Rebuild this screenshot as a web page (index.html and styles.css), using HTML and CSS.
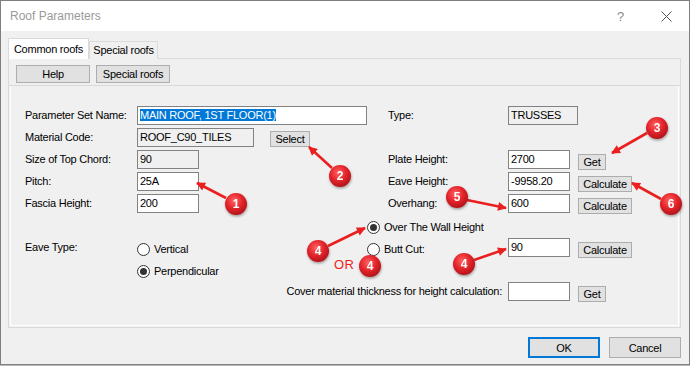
FILE: index.html
```html
<!DOCTYPE html>
<html lang="en">
<head>
    <meta charset="UTF-8">
    <title>Roof Parameters</title>
    <link rel="stylesheet" href="styles.css">
</head>
<body>
    <div class="window">
        <div class="titlebar">
            <span class="title">Roof Parameters</span>
            <span class="help">?</span>
            <svg class="close" width="11" height="11" viewBox="0 0 11 11">
                <path d="M0.5 0.5L10.5 10.5M10.5 0.5L0.5 10.5" stroke="#555" stroke-width="1" fill="none"/>
            </svg>
        </div>

        <div class="content">
            <!-- Tabs -->
            <div class="tabs">
                <div class="tab active">Common roofs</div>
                <div class="tab">Special roofs</div>
            </div>

            <div class="page">
                <div class="toolbar">
                    <button class="btn tool-button">Help</button>
                    <button class="btn tool-button">Special roofs</button>
                </div>

                <div class="form">
                    <div class="grid">
                        <!-- row 1 -->
                        <span class="label">Parameter Set Name:</span>
                        <span class="field wide"><span class="selected">MAIN ROOF, 1ST FLOOR(1)</span></span>
                        <span class="label right-label">Type:</span>
                        <span class="field readonly type-field">TRUSSES</span>

                        <!-- row 2 -->
                        <span class="label">Material Code:</span>
                        <span class="pair">
                            <span class="field readonly material">ROOF_C90_TILES</span>
                            <button class="btn small select-button">Select</button>
                        </span>

                        <!-- row 3 -->
                        <span class="label">Size of Top Chord:</span>
                        <span class="field readonly short">90</span>
                        <span class="label right-label">Plate Height:</span>
                        <span class="field short">2700</span>
                        <button class="btn small get-button">Get</button>

                        <!-- row 4 -->
                        <span class="label">Pitch:</span>
                        <span class="field short">25A</span>
                        <span class="label right-label">Eave Height:</span>
                        <span class="field short">-9958.20</span>
                        <button class="btn small calc-button">Calculate</button>

                        <!-- row 5 -->
                        <span class="label">Fascia Height:</span>
                        <span class="field short">200</span>
                        <span class="label right-label">Overhang:</span>
                        <span class="field short">600</span>
                        <button class="btn small calc-button">Calculate</button>

                        <!-- row 6 -->
                        <span class="radio wall-radio"><span class="dot on"></span>Over The Wall Height</span>

                        <!-- row 7 -->
                        <span class="label">Eave Type:</span>
                        <span class="radio"><span class="dot"></span>Vertical</span>
                        <span class="radio butt-radio"><span class="dot"></span>Butt Cut:</span>
                        <span class="field short">90</span>
                        <button class="btn small calc-button">Calculate</button>

                        <!-- row 8 -->
                        <span class="radio perp-radio"><span class="dot on"></span>Perpendicular</span>

                        <!-- row 9 -->
                        <span class="label cover-label">Cover material thickness for height calculation:</span>
                        <span class="field short"></span>
                        <button class="btn small get-button">Get</button>
                    </div>
                </div>
            </div>

            <div class="actions">
                <button class="btn dialog-button default">OK</button>
                <button class="btn dialog-button">Cancel</button>
            </div>
        </div>
    </div>

    <!-- Callouts drawn over the dialog -->
    <svg class="notes" width="690" height="366" viewBox="0 0 690 366">
        <defs>
            <radialGradient id="ball" cx="42%" cy="35%" r="65%">
                <stop offset="0" stop-color="#ff6464"/>
                <stop offset="0.55" stop-color="#e4252b"/>
                <stop offset="1" stop-color="#b3141a"/>
            </radialGradient>
            <marker id="head" viewBox="0 0 10 10" refX="9" refY="5" markerWidth="4" markerHeight="3.4" orient="auto">
                <path d="M0 0L10 5L0 10z" fill="#ea1f1f"/>
            </marker>
            <filter id="shadow" x="-40%" y="-40%" width="180%" height="180%">
                <feDropShadow dx="0.5" dy="1.5" stdDeviation="1.2" flood-color="#000" flood-opacity="0.35"/>
            </filter>
        </defs>

        <g class="arrows">
            <line x1="226" y1="198" x2="197" y2="183" marker-end="url(#head)"/>
            <line x1="332" y1="168" x2="309" y2="147" marker-end="url(#head)"/>
            <line x1="647" y1="133" x2="612" y2="153" marker-end="url(#head)"/>
            <line x1="467" y1="200" x2="506" y2="208" marker-end="url(#head)"/>
            <line x1="661" y1="199" x2="632" y2="183" marker-end="url(#head)"/>
            <line x1="328" y1="246" x2="365" y2="228" marker-end="url(#head)"/>
            <line x1="474" y1="260" x2="506" y2="249" marker-end="url(#head)"/>
        </g>

        <text class="or" x="334" y="269">OR</text>

        <g class="badge" filter="url(#shadow)">
            <circle cx="236" cy="204" r="11"/><text x="236" y="208">1</text>
        </g>
        <g class="badge" filter="url(#shadow)">
            <circle cx="340" cy="176" r="11"/><text x="340" y="180">2</text>
        </g>
        <g class="badge" filter="url(#shadow)">
            <circle cx="657" cy="128" r="11"/><text x="657" y="132">3</text>
        </g>
        <g class="badge" filter="url(#shadow)">
            <circle cx="457" cy="197" r="11"/><text x="457" y="201">5</text>
        </g>
        <g class="badge" filter="url(#shadow)">
            <circle cx="671" cy="204" r="11"/><text x="671" y="208">6</text>
        </g>
        <g class="badge" filter="url(#shadow)">
            <circle cx="318" cy="251" r="11"/><text x="318" y="255">4</text>
        </g>
        <g class="badge" filter="url(#shadow)">
            <circle cx="370" cy="266" r="11"/><text x="370" y="270">4</text>
        </g>
        <g class="badge" filter="url(#shadow)">
            <circle cx="464" cy="264" r="11"/><text x="464" y="268">4</text>
        </g>
    </svg>
</body>
</html>
```

FILE: styles.css
```css
/* Basic Reset */
* {
    margin: 0;
    padding: 0;
    box-sizing: border-box;
}

body {
    position: relative;
    width: 690px;
    height: 366px;
    overflow: hidden;
    background-color: #b9b9b9;
    font-family: "Liberation Sans", Arial, sans-serif;
    font-size: 11px;
    letter-spacing: -0.25px;
    color: #000;
}

/* Window frame */
.window {
    width: 690px;
    height: 365px;
    border: 1px solid #7f7f7f;
    background-color: #f0f0f0;
}

.titlebar {
    height: 30px;
    background-color: #ffffff;
    display: flex;
    align-items: center;
    padding-left: 9px;
}

.title {
    flex: 1;
    font-size: 12px;
    letter-spacing: 0;
    color: #9a9a9a;
}

.help {
    font-size: 13px;
    color: #8a8a8a;
    margin-right: 37px;
}

.close {
    margin-right: 17px;
}

.content {
    padding: 7px 7px 0 7px;
}

/* Tabs */
.tabs {
    display: flex;
    align-items: flex-end;
    height: 21px;
    margin-bottom: -1px;
    position: relative;
    z-index: 1;
}

.tab {
    width: 69px;
    height: 18px;
    line-height: 17px;
    text-align: center;
    border: 1px solid #dadada;
    border-bottom: none;
    background-color: #f0f0f0;
}

.tab.active {
    width: 81px;
    height: 21px;
    line-height: 20px;
    background-color: #ffffff;
}

.page {
    width: 673px;
    height: 270px;
    border: 1px solid #dadada;
    display: flex;
    flex-direction: column;
}

.toolbar {
    height: 27px;
    display: flex;
    gap: 6px;
    padding: 6px 0 0 7px;
    border-bottom: 1px solid #d9d9d9;
}

/* Buttons */
.btn {
    font-family: inherit;
    font-size: 11px;
    letter-spacing: -0.25px;
    color: #000;
    background-color: #e1e1e1;
    border: 1px solid #adadad;
    cursor: pointer;
}

.tool-button {
    width: 74px;
    height: 18px;
}

.small {
    height: 16px;
    line-height: 14px;
    margin-top: 4px;
    justify-self: start;
}

.select-button {
    width: 40px;
    margin-top: 3px;
    margin-left: 16px;
}

.get-button {
    width: 28px;
}

.calc-button {
    width: 54px;
}

/* Form */
.form {
    flex: 1;
    margin: 0 1px 1px;
    border: 1px solid #ffffff;
    border-top: none;
    padding: 20px 0 0 14px;
}

.grid {
    display: grid;
    grid-template-columns: 112px 230px 21px 120px 70px auto;
    grid-template-rows: repeat(9, 22px);
    align-items: start;
}

.label {
    grid-column: 1;
    line-height: 19px;
    white-space: nowrap;
}

.right-label {
    grid-column: 4;
}

.cover-label {
    grid-column: 2 / span 3;
    text-align: right;
    padding-right: 6px;
}

.field {
    height: 19px;
    line-height: 17px;
    padding: 0 2px;
    border: 1px solid #828282;
    background-color: #ffffff;
    white-space: nowrap;
    overflow: hidden;
    justify-self: start;
}

.field.readonly {
    background-color: #f0f0f0;
}

.wide {
    width: 230px;
}

.short {
    width: 62px;
}

.type-field {
    grid-column: 5 / span 2;
    width: 70px;
}

.material {
    width: 117px;
}

.selected {
    background-color: #0078d7;
    color: #ffffff;
}

.pair {
    display: flex;
    align-items: flex-start;
}

/* Radio buttons */
.radio {
    display: flex;
    align-items: center;
    gap: 4px;
    height: 22px;
    white-space: nowrap;
}

.wall-radio {
    grid-column: 3 / span 4;
}

.butt-radio {
    grid-column: 3 / span 2;
}

.perp-radio {
    grid-column: 2;
}

.dot {
    width: 13px;
    height: 13px;
    border: 1px solid #333333;
    border-radius: 50%;
    background-color: #ffffff;
    display: flex;
    align-items: center;
    justify-content: center;
}

.dot.on::after {
    content: "";
    width: 7px;
    height: 7px;
    border-radius: 50%;
    background-color: #333333;
}

/* Dialog buttons */
.actions {
    display: flex;
    justify-content: flex-end;
    gap: 9px;
    padding: 9px 1px 0 0;
}

.dialog-button {
    width: 72px;
    height: 21px;
}

.dialog-button.default {
    border: 2px solid #0078d7;
}

/* Callouts */
.notes {
    position: absolute;
    top: 0;
    left: 0;
    pointer-events: none;
}

.arrows line {
    stroke: #ea1f1f;
    stroke-width: 2.6;
}

.badge circle {
    fill: url(#ball);
}

.badge text {
    fill: #ffffff;
    font-family: "Liberation Sans", Arial, sans-serif;
    font-size: 12px;
    font-weight: bold;
    text-anchor: middle;
}

.or {
    fill: #ef1c1c;
    font-family: "Liberation Sans", Arial, sans-serif;
    font-size: 13px;
    letter-spacing: 0.5px;
}
```
